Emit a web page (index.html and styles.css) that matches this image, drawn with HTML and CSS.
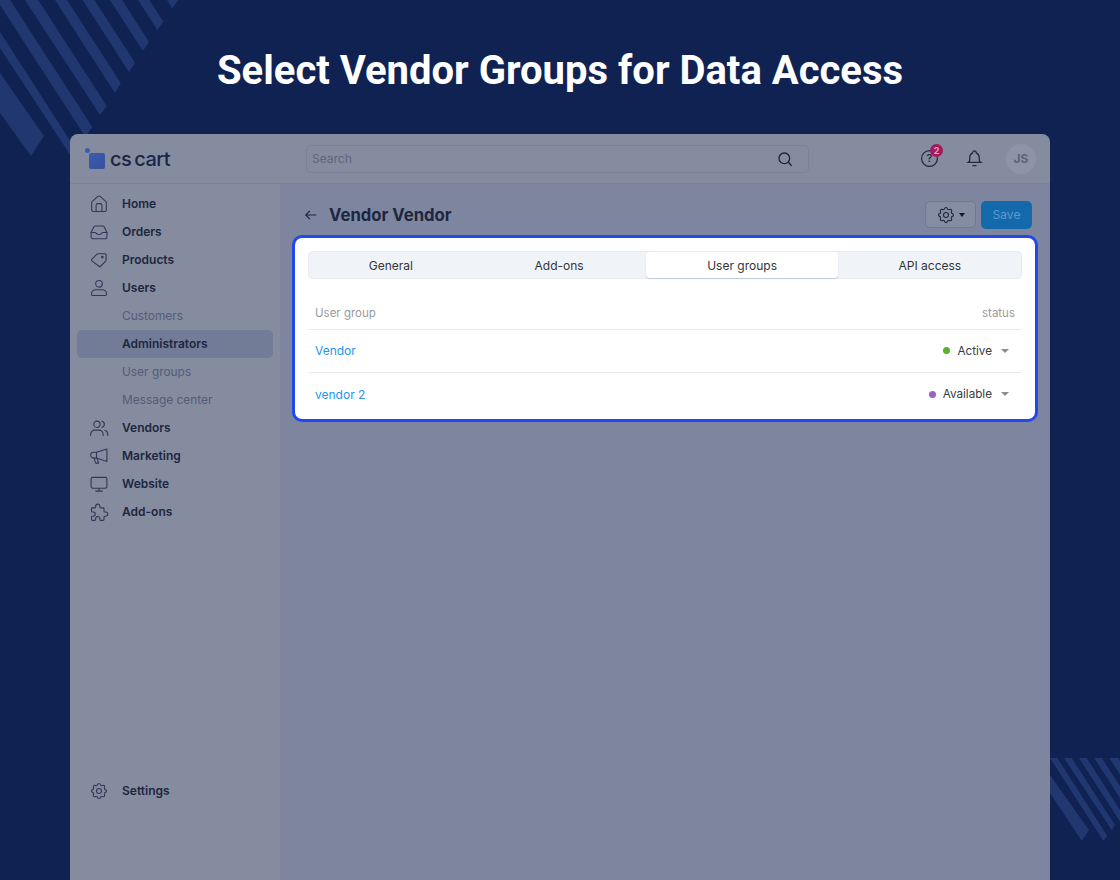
FILE: index.html
```html
<!DOCTYPE html>
<html lang="en">
<head>
<meta charset="utf-8">
<title>Select Vendor Groups for Data Access</title>
<link rel="stylesheet" href="styles.css">
</head>
<body>
<svg class="decor" viewBox="0 0 1120 880" aria-hidden="true">
  <g class="stripes">
    <polygon points="0,73 44,136 31,156 0,113"/>
    <polygon points="0,32 80,156 80,170 0,48"/>
    <polygon points="10,0 92.3,127 85.5,137 0,5 0,0"/>
    <polygon points="25,0 38.3,0 106.7,106 100,115"/>
    <polygon points="55,0 67,0 120.7,83 115,93"/>
    <polygon points="82.5,0 94.5,0 135,62.7 129,72"/>
    <polygon points="110,0 122,0 149,41.7 143,51"/>
    <polygon points="138,0 149.3,0 163.3,21.7 157.3,30"/>
    <polygon points="167,0 178,0 172.3,8.3"/>
    <polygon points="1050,775 1089,830 1081.7,840.7 1050,793"/>
    <polygon points="1050,758 1057.3,758 1107.3,836 1103.3,840.7"/>
    <polygon points="1064,758 1071.7,758 1115,825 1111.7,830"/>
    <polygon points="1079,758 1086.7,758 1120,810 1120,821.6"/>
    <polygon points="1094.3,758 1101.7,758 1120,786 1120,798"/>
    <polygon points="1109.3,758 1118.3,758 1120,760.6 1120,774.6"/>
  </g>
</svg>

<header class="hero"><h1>Select Vendor Groups for Data Access</h1></header>

<div class="window">
  <div class="topbar">
    <div class="logo">
      <span class="logo-mark"><span class="logo-dot"></span><span class="logo-square"></span></span>
      <span class="logo-text">cs cart</span>
    </div>
    <div class="search">
      <span class="search-text">Search</span>
      <svg class="icon-search" viewBox="0 0 24 24"><circle cx="11" cy="11" r="8"/><path d="m17 17 5 5"/></svg>
    </div>
    <div class="top-actions">
      <span class="help">
        <svg class="icon-top" viewBox="0 0 24 24"><circle cx="12" cy="12" r="10"/></svg>
        <span class="help-mark">?</span>
        <span class="badge">2</span>
      </span>
      <svg class="icon-top" viewBox="0 0 24 24"><path d="M10 4.5a2 2 0 1 1 4 0a7 7 0 0 1 4 6v3.5a4 4 0 0 0 2 3H4a4 4 0 0 0 2-3v-3.500a7 7 0 0 1 4-6"/><path d="M9.500 21h5"/></svg>
      <span class="avatar">JS</span>
    </div>
  </div>

  <div class="body">
    <nav class="sidebar">
      <div class="nav-list">
        <a class="nav-item"><svg class="icon" viewBox="0 0 24 24"><path d="M3.200 10.500c0-.6.3-1.200.8-1.600l6.700-6a2 2 0 0 1 2.600 0l6.700 6c.5.400.8 1 .8 1.600V19a2 2 0 0 1-2 2H5.200a2 2 0 0 1-2-2z"/><path d="M8.500 21v-7.500a2 2 0 0 1 2-2h3a2 2 0 0 1 2 2V21"/></svg>Home</a>
        <a class="nav-item"><svg class="icon" viewBox="0 0 24 24"><path d="M2.500 12.500 6 5.500a1.500 1.500 0 0 1 1.300-.8h9.400a1.500 1.500 0 0 1 1.300.8l3.500 7V18a2 2 0 0 1-2 2H4.500a2 2 0 0 1-2-2z"/><path d="M2.500 12.500h5c1 0 1.300 2.500 4.500 2.500s3.500-2.500 4.500-2.500h5"/></svg>Orders</a>
        <a class="nav-item"><svg class="icon" viewBox="0 0 24 24"><path d="M3.500 11 9.500 5a2 2 0 0 1 1.400-.6H19a1.500 1.500 0 0 1 1.500 1.500V12a2 2 0 0 1-.6 1.400L14 19.500a1.500 1.500 0 0 1-2 0L3.500 13a1.400 1.400 0 0 1 0-2z"/><circle cx="16" cy="8.500" r="1"/></svg>Products</a>
        <a class="nav-item"><svg class="icon" viewBox="0 0 24 24"><circle cx="12" cy="7" r="4"/><path d="M3 19a5 5 0 0 1 5-5h8a5 5 0 0 1 5 5v.5a1.500 1.500 0 0 1-1.500 1.500h-15A1.500 1.500 0 0 1 3 19.500z"/></svg>Users</a>
        <a class="nav-item nav-sub">Customers</a>
        <a class="nav-item nav-active">Administrators</a>
        <a class="nav-item nav-sub">User groups</a>
        <a class="nav-item nav-sub">Message center</a>
        <a class="nav-item"><svg class="icon" viewBox="0 0 24 24"><circle cx="9.500" cy="7.500" r="3.800"/><path d="M2 21v-1.500a5 5 0 0 1 5-5h5a5 5 0 0 1 5 5V21"/><path d="M15.500 3.800a3.800 3.800 0 0 1 0 7.400"/><path d="M19 14.800a5 5 0 0 1 3.500 4.700V21"/></svg>Vendors</a>
        <a class="nav-item"><svg class="icon" viewBox="0 0 24 24"><path d="M21.500 3.500v15L9 14.500H5.500a3.500 3.500 0 0 1 0-7H9z"/><path d="M9 7.500v7"/><path d="M6 14.500 8 20.500h3.500L10 15.500"/></svg>Marketing</a>
        <a class="nav-item"><svg class="icon" viewBox="0 0 24 24"><rect x="2.500" y="4" width="19" height="13" rx="2"/><path d="M12 17v3.500M8 20.500h8"/></svg>Website</a>
        <a class="nav-item"><svg class="icon" viewBox="0 0 24 24"><path d="M4 7h3a1 1 0 0 0 1-1V5a2.500 2.500 0 0 1 5 0v1a1 1 0 0 0 1 1h3a1 1 0 0 1 1 1v3a1 1 0 0 0 1 1h1a2.500 2.500 0 0 1 0 5h-1a1 1 0 0 0-1 1v3a1 1 0 0 1-1 1h-3a1 1 0 0 1-1-1v-1a2.500 2.500 0 0 0-5 0v1a1 1 0 0 1-1 1H4a1 1 0 0 1-1-1v-3a1 1 0 0 1 1-1h1a2.500 2.500 0 0 0 0-5H4a1 1 0 0 1-1-1V8a1 1 0 0 1 1-1"/></svg>Add-ons</a>
      </div>
      <a class="nav-item nav-settings"><svg class="icon" viewBox="0 0 24 24"><path d="M10.325 4.317c.426-1.756 2.924-1.756 3.350 0a1.724 1.724 0 0 0 2.573 1.066c1.543-.940 3.310.826 2.370 2.370a1.724 1.724 0 0 0 1.065 2.572c1.756.426 1.756 2.924 0 3.350a1.724 1.724 0 0 0-1.066 2.573c.940 1.543-.826 3.310-2.370 2.370a1.724 1.724 0 0 0-2.572 1.065c-.426 1.756-2.924 1.756-3.350 0a1.724 1.724 0 0 0-2.573-1.066c-1.543.940-3.310-.826-2.370-2.370a1.724 1.724 0 0 0-1.065-2.572c-1.756-.426-1.756-2.924 0-3.350a1.724 1.724 0 0 0 1.066-2.573c-.940-1.543.826-3.310 2.370-2.370c1 .608 2.296.070 2.572-1.065z"/><circle cx="12" cy="12" r="3"/></svg>Settings</a>
    </nav>

    <main class="main">
      <div class="page-head">
        <svg class="back" viewBox="0 0 24 24"><path d="M21 12H3M10 5l-7 7 7 7"/></svg>
        <h2>Vendor Vendor</h2>
        <div class="page-actions">
          <button class="gear-btn"><svg class="icon-gear" viewBox="0 0 24 24"><path d="M10.325 4.317c.426-1.756 2.924-1.756 3.350 0a1.724 1.724 0 0 0 2.573 1.066c1.543-.940 3.310.826 2.370 2.370a1.724 1.724 0 0 0 1.065 2.572c1.756.426 1.756 2.924 0 3.350a1.724 1.724 0 0 0-1.066 2.573c.940 1.543-.826 3.310-2.370 2.370a1.724 1.724 0 0 0-2.572 1.065c-.426 1.756-2.924 1.756-3.350 0a1.724 1.724 0 0 0-2.573-1.066c-1.543.940-3.310-.826-2.370-2.370a1.724 1.724 0 0 0-1.065-2.572c-1.756-.426-1.756-2.924 0-3.350a1.724 1.724 0 0 0 1.066-2.573c-.940-1.543.826-3.310 2.370-2.370c1 .608 2.296.070 2.572-1.065z"/><circle cx="12" cy="12" r="3"/></svg><span class="caret caret-dark"></span></button>
          <button class="save-btn">Save</button>
        </div>
      </div>

      <section class="panel">
        <div class="tabs">
          <div class="tab">General</div>
          <div class="tab">Add-ons</div>
          <div class="tab tab-active">User groups</div>
          <div class="tab">API access</div>
        </div>
        <div class="table-head"><span>User group</span><span>status</span></div>
        <div class="row">
          <a class="row-link">Vendor</a>
          <span class="status"><i class="dot dot-green"></i>Active<span class="caret"></span></span>
        </div>
        <div class="row row-last">
          <a class="row-link">vendor 2</a>
          <span class="status"><i class="dot dot-purple"></i>Available<span class="caret"></span></span>
        </div>
      </section>
    </main>
  </div>
</div>
</body>
</html>
```

FILE: styles.css
```css
* { box-sizing: border-box; }
html, body { margin: 0; height: 880px; overflow: hidden; }
body {
  background: #102252;
  font-family: Inter, "Liberation Sans", sans-serif;
  font-size: 12px;
  color: #1d2640;
  position: relative;
}
.decor { position: absolute; left: 0; top: 0; width: 1120px; height: 880px; }
.stripes polygon { fill: #20376f; }

.hero { position: relative; height: 134px; padding-top: 48px; }
.hero h1 {
  margin: 0;
  font-family: Roboto, "Liberation Sans", sans-serif;
  font-weight: 700;
  font-size: 40px;
  line-height: 46px;
  color: #fff;
  text-align: center;
}

.window {
  position: relative;
  margin-left: 70px;
  width: 980px;
  height: 746px;
  background: #858c9f;
  border-radius: 8px 8px 0 0;
  display: flex;
  flex-direction: column;
  overflow: hidden;
}

.topbar {
  height: 50px;
  flex: none;
  display: flex;
  align-items: center;
  border-bottom: 1px solid #7b839a;
  padding-left: 14px;
}
.logo { width: 222px; display: flex; align-items: center; gap: 5px; }
.logo-mark { position: relative; width: 21px; height: 22px; flex: none; display: block; }
.logo-dot { position: absolute; left: 1px; top: 0; width: 5px; height: 5px; border-radius: 50%; background: #3d5cab; }
.logo-square { position: absolute; left: 5px; top: 5px; width: 16px; height: 16px; border-radius: 2px; background: linear-gradient(135deg, #3b5cae, #36509d); }
.logo-text { font-size: 20px; font-weight: 500; color: #1a2647; letter-spacing: -0.5px; word-spacing: -2px; line-height: 22px; }

.search {
  width: 503px;
  height: 28px;
  border: 1px solid #7b839a;
  border-radius: 5px;
  display: flex;
  align-items: center;
  justify-content: space-between;
  padding: 0 15px 0 5px;
  flex: none;
}
.search-text { color: #5d6680; font-size: 12px; }
.icon-search { width: 16px; height: 16px; fill: none; stroke: #1a2240; stroke-width: 2; }

.top-actions { display: flex; align-items: center; margin-left: 111px; gap: 26px; }
.icon-top { width: 19px; height: 19px; fill: none; stroke: #1f2945; stroke-width: 1.6; display: block; }
.help { position: relative; display: block; width: 19px; height: 19px; }
.help-mark { position: absolute; left: 0; right: 0; top: 2px; text-align: center; font-size: 11px; line-height: 15px; color: #1f2945; font-weight: 500; }
.badge {
  position: absolute; left: 10px; top: -5px;
  width: 13px; height: 13px; border-radius: 50%;
  background: #a3195b; color: #d5a8bf;
  font-size: 9px; font-weight: 700; line-height: 13px; text-align: center;
}
.avatar {
  width: 30px; height: 30px; border-radius: 50%;
  background: #8d94a7; color: #5c6480;
  font-size: 12px; font-weight: 700; line-height: 30px; text-align: center;
  margin-left: -4px;
}

.body { flex: 1; display: flex; min-height: 0; }
.sidebar {
  width: 210px;
  flex: none;
  padding: 6px 7px 0;
  display: flex;
  flex-direction: column;
  background: #858c9f;
}
.nav-list { flex: 1; }
.nav-item {
  height: 28px;
  display: flex;
  align-items: center;
  padding: 0 0 1px 45px;
  position: relative;
  font-size: 12px;
  font-weight: 600;
  color: #1d2640;
  border-radius: 5px;
}
.nav-sub { font-size: 11.9px; font-weight: 400; color: #535c79; }
.nav-active { background: #737c96; }
.nav-settings { margin-bottom: 75px; }
.icon {
  position: absolute; left: 12px; top: 4px;
  width: 20px; height: 20px;
  fill: none; stroke: #2f3957; stroke-width: 1.3;
  stroke-linecap: round; stroke-linejoin: round;
}

.main { flex: 1; min-width: 0; background: #7d869e; padding: 0 12px; }
.page-head { height: 51px; display: flex; align-items: center; padding: 10px 6px 0 12px; }
.back { width: 14px; height: 14px; fill: none; stroke: #1d2640; stroke-width: 2; margin-right: 11px; flex: none; }
.page-head h2 { margin: 0; font-size: 16.7px; font-weight: 700; color: #1d2640; }
.page-actions { margin-left: auto; display: flex; align-items: center; gap: 5px; }
.gear-btn {
  width: 51px; height: 27px; padding: 0;
  border: 1px solid #6f7993; border-radius: 5px;
  background: #858da3;
  display: flex; align-items: center; justify-content: center; gap: 3px;
}
.icon-gear { width: 20px; height: 20px; fill: none; stroke: #1d2640; stroke-width: 1.3; }
.caret { display: inline-block; width: 0; height: 0; border-left: 4px solid transparent; border-right: 4px solid transparent; border-top: 4px solid #8c8c8c; margin-left: 9px; }
.caret-dark { border-top-color: #10182f; border-left-width: 3.5px; border-right-width: 3.5px; margin-left: 0; }
.save-btn {
  width: 51px; height: 28px; padding: 0;
  border: 0; border-radius: 5px;
  background: #1469ac; color: #5f9bcb;
  font-family: inherit; font-size: 12px; font-weight: 400;
}

.panel {
  background: #fff;
  border: 3px solid #2347ea;
  border-radius: 10px;
  padding: 13px 13px 3px;
}
.tabs {
  height: 28px;
  display: flex;
  background: #f0f3f8;
  border-radius: 5px;
  padding: 1px 0;
  box-shadow: inset 0 0 0 1px #e9edf3;
}
.tab {
  flex: 1 1 auto;
  padding: 0 10px;
  text-align: center;
  font-size: 12px;
  line-height: 27px;
  color: #33343a;
}
.tab-active { margin-left: 2px; background: #fff; border-radius: 4px; box-shadow: 0 1px 1px rgba(120, 135, 170, .35); }

.table-head {
  margin-top: 18px;
  height: 33px;
  padding: 0 7px;
  display: flex;
  align-items: center;
  justify-content: space-between;
  color: #9b9b9b;
  font-size: 11.5px;
  border-bottom: 1px solid #e6eaf1;
}
.row {
  height: 43px;
  padding: 0 13px 1px 7px;
  display: flex;
  align-items: center;
  justify-content: space-between;
  border-bottom: 1px solid #e6eaf1;
  font-size: 12px;
}
.row-last { border-bottom: 0; }
.row-link { color: #2296ee; }
.status { display: flex; align-items: center; color: #3a3b40; font-size: 11.7px; }
.dot { width: 7px; height: 7px; border-radius: 50%; margin-right: 7px; display: block; }
.dot-green { background: #5bb12f; }
.dot-purple { background: #9c62c9; }
```
